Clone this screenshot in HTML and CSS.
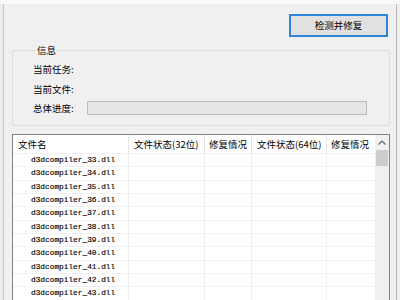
FILE: index.html
```html
<!DOCTYPE html>
<html lang="zh-CN">
<head>
<meta charset="utf-8">
<title>检测并修复</title>
<link rel="stylesheet" href="styles.css">
</head>
<body>
<div class="topbar"></div>
<div class="screen">
  <div class="edge-left"></div>
  <div class="window">
    <button class="btn">检测并修复</button>
    <fieldset class="group">
      <legend>信息</legend>
      <div class="info-row r1"><span class="label">当前任务:</span></div>
      <div class="info-row r2"><span class="label">当前文件:</span></div>
      <div class="info-row r3"><span class="label">总体进度:</span><div class="progress"></div></div>
    </fieldset>
    <div class="list">
      <div class="grid">
        <div class="th">文件名</div>
        <div class="th">文件状态(32位)</div>
        <div class="th">修复情况</div>
        <div class="th">文件状态(64位)</div>
        <div class="th">修复情况</div>

        <div class="td name">d3dcompiler_33.dll</div><div class="td"></div><div class="td"></div><div class="td"></div><div class="td"></div>
        <div class="td name">d3dcompiler_34.dll</div><div class="td"></div><div class="td"></div><div class="td"></div><div class="td"></div>
        <div class="td name">d3dcompiler_35.dll</div><div class="td"></div><div class="td"></div><div class="td"></div><div class="td"></div>
        <div class="td name">d3dcompiler_36.dll</div><div class="td"></div><div class="td"></div><div class="td"></div><div class="td"></div>
        <div class="td name">d3dcompiler_37.dll</div><div class="td"></div><div class="td"></div><div class="td"></div><div class="td"></div>
        <div class="td name">d3dcompiler_38.dll</div><div class="td"></div><div class="td"></div><div class="td"></div><div class="td"></div>
        <div class="td name">d3dcompiler_39.dll</div><div class="td"></div><div class="td"></div><div class="td"></div><div class="td"></div>
        <div class="td name">d3dcompiler_40.dll</div><div class="td"></div><div class="td"></div><div class="td"></div><div class="td"></div>
        <div class="td name">d3dcompiler_41.dll</div><div class="td"></div><div class="td"></div><div class="td"></div><div class="td"></div>
        <div class="td name">d3dcompiler_42.dll</div><div class="td"></div><div class="td"></div><div class="td"></div><div class="td"></div>
        <div class="td name">d3dcompiler_43.dll</div><div class="td"></div><div class="td"></div><div class="td"></div><div class="td"></div>
      </div>
      <div class="scrollbar">
        <div class="arrow">
          <svg width="8" height="5" viewBox="0 0 8 5"><path d="M0.5 4.5 L4 1 L7.5 4.5" fill="none" stroke="#606060" stroke-width="1.2"/></svg>
        </div>
        <div class="thumb"></div>
      </div>
    </div>
  </div>
  <div class="edge-right"></div>
</div>
</body>
</html>
```

FILE: styles.css
```css
html, body {
  margin: 0;
  padding: 0;
  width: 400px;
  height: 300px;
  overflow: hidden;
  background: #f0f0f0;
  font-family: "Noto Sans CJK SC", "Microsoft YaHei", sans-serif;
  font-size: 9.5px;
  color: #000;
}

.topbar {
  height: 4px;
  background: #f9f9f9;
}

.screen {
  display: flex;
  height: 296px;
}

.edge-left {
  width: 3px;
  background: #ececec;
  border-right: 1px solid #c6c6c6;
}

.edge-right {
  width: 3px;
  background: #f0f0f0;
  border-left: 1px solid #b8b8b8;
}

.window {
  flex: 1;
  display: flex;
  flex-direction: column;
  padding: 0 6px 0 8px;
  min-width: 0;
}

.btn {
  align-self: flex-end;
  margin: 10px 2px 0 0;
  width: 99px;
  height: 23px;
  padding: 0;
  border: 2px solid #2a86d8;
  background: #e1e1e1;
  font-family: inherit;
  font-size: 9.5px;
  color: #000;
  line-height: 1;
}

.group {
  margin: 6px 0 0 0;
  padding: 2px 22px 7px 20px;
  border: 1px solid #dcdcdc;
  min-inline-size: 0;
}

.group legend {
  padding: 0 1px;
  margin-left: 3px;
  line-height: 14px;
  font-size: 9.5px;
}

.info-row {
  display: flex;
  align-items: center;
  height: 20px;
}

.info-row.r2 {
  height: 19px;
}

.label {
  width: 54px;
  flex: none;
}

.progress {
  flex: 1;
  height: 14px;
  box-sizing: border-box;
  border: 1px solid #bcbcbc;
  background: #e6e6e6;
}

.list {
  margin-top: 8px;
  flex: 1;
  display: flex;
  border: 1px solid #828282;
  border-bottom: none;
  background: #fff;
  min-height: 0;
}

.grid {
  flex: 1;
  display: grid;
  grid-template-columns: 116px 76px 47px 75px 1fr;
  grid-template-rows: 19px;
  grid-auto-rows: 13.333px;
  align-content: start;
}

.th {
  box-sizing: border-box;
  border-right: 1px solid #e5e5e5;
  border-bottom: 1px solid #f0f0f0;
  padding-left: 5px;
  line-height: 18px;
  white-space: nowrap;
  overflow: hidden;
}

.th:nth-child(3), .th:nth-child(5) {
  padding-left: 4px;
}

.th:nth-child(5) {
  border-right: none;
}

.td {
  box-sizing: border-box;
  border-right: 1px solid #f0f0f0;
  border-bottom: 1px solid #f0f0f0;
}

.td:nth-child(5n) {
  border-right: none;
}

.td.name {
  font-family: "Liberation Mono", monospace;
  font-size: 7.8px;
  line-height: 12px;
  padding-left: 18px;
  color: #000;
  -webkit-text-stroke: 0.15px #000;
  white-space: nowrap;
}

.scrollbar {
  width: 14px;
  background: #f0f0f0;
  display: flex;
  flex-direction: column;
  align-items: center;
}

.arrow {
  height: 15px;
  display: flex;
  align-items: center;
  justify-content: center;
}

.thumb {
  width: 12px;
  height: 16px;
  background: #cdcdcd;
}
```
